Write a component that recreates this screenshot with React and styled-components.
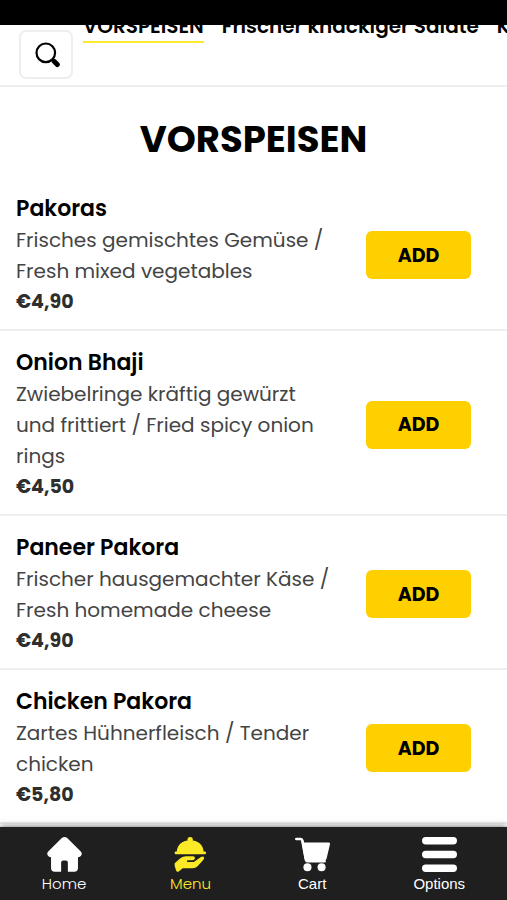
import React, { useState } from "react";
import styled, { createGlobalStyle } from "styled-components";

const GlobalStyle = createGlobalStyle`
  * {
    box-sizing: border-box;
  }
  body {
    margin: 0;
    background-color: #ffffff;
    color: #000000;
    font-family: Poppins, Inter, "Liberation Sans", sans-serif;
  }
`;

export const Page = styled.div`
  display: flex;
  flex-direction: column;
  height: 100vh;
  overflow: hidden;
`;

export const StatusBar = styled.div`
  flex: none;
  height: 25px;
  background-color: #000000;
`;

export const Header = styled.header`
  flex: none;
  display: flex;
  align-items: flex-start;
  gap: 10px;
  height: 62px;
  padding-left: 19px;
  border-bottom: 2px solid #eeeeee;
  overflow: hidden;
`;

export const SearchButton = styled.button`
  flex: none;
  display: flex;
  justify-content: center;
  align-items: center;
  width: 54px;
  height: 49px;
  margin-top: 5px;
  padding: 0;
  border: 2px solid #eeeeee;
  border-radius: 7px;
  background-color: #ffffff;
  cursor: pointer;
`;

export const Tabs = styled.nav`
  display: flex;
  gap: 18px;
  margin-top: -13px;
  overflow: hidden;
`;

export const Tab = styled.a`
  flex: none;
  border-bottom: 2px solid ${(props) => (props.$active ? "#fbe930" : "transparent")};
  color: #000000;
  font-size: 20px;
  font-weight: 600;
  line-height: 29px;
  text-decoration: none;
  white-space: nowrap;
`;

export const Main = styled.main`
  flex: 1;
  min-height: 0;
  overflow-y: auto;
  scrollbar-width: none;
`;

export const Title = styled.h1`
  margin: 0;
  padding: 24px 16px 10px;
  font-size: 37px;
  font-weight: 700;
  line-height: 56px;
  text-align: center;
`;

export const List = styled.ul`
  margin: 0;
  padding: 0;
  list-style: none;
`;

export const Item = styled.li`
  display: flex;
  align-items: center;
  gap: 36px;
  padding: 16px 36px 12px 16px;
  border-bottom: 2px solid #eeeeee;
`;

export const ItemText = styled.div`
  flex: 1;
`;

export const ItemName = styled.h2`
  margin: 0;
  font-size: 22px;
  font-weight: 600;
  line-height: 32px;
`;

export const Description = styled.p`
  margin: 0;
  color: #444444;
  font-size: 20px;
  line-height: 31px;
`;

export const Price = styled.p`
  margin: 0;
  color: #2e2e2e;
  font-size: 19px;
  font-weight: 700;
  line-height: 30px;
`;

export const AddButton = styled.button`
  flex: none;
  width: 105px;
  height: 48px;
  padding: 0;
  border: none;
  border-radius: 6px;
  background-color: #ffd000;
  color: #000000;
  font-family: inherit;
  font-size: 19px;
  font-weight: 700;
  cursor: pointer;
`;

export const BottomNav = styled.nav`
  flex: none;
  z-index: 1;
  display: flex;
  justify-content: space-around;
  height: 73px;
  padding-top: 10px;
  background-color: #1f1f1f;
  box-shadow: 0 -1px 6px rgba(0, 0, 0, 0.5);
`;

export const NavLink = styled.a`
  display: flex;
  flex-direction: column;
  align-items: center;
  color: ${(props) => (props.$active ? "#fdea27" : "#ffffff")};
  font-family: ${(props) =>
    props.$plain ? '"Liberation Sans", sans-serif' : "inherit"};
  font-size: 15px;
  font-weight: 300;
  line-height: 24px;
  text-decoration: none;

  svg {
    width: 35px;
    height: 35px;
  }
`;

const SearchIcon = () => (
  <svg width="28" height="27" viewBox="-3 -1 28 27" fill="none" stroke="#000">
    <circle cx="10.8" cy="10.8" r="9.3" strokeWidth="2.2" />
    <path d="M17.3 17.3l2 2" strokeWidth="3" />
    <path d="M19.1 19.3l3.2 3.2" strokeWidth="5" strokeLinecap="round" />
  </svg>
);

const HomeIcon = () => (
  <svg viewBox="0 0 104 104" fill="currentColor">
    <path d="M44 3Q52-3 60 3L101 44Q105 49 102 54Q99 60 92 60V92Q92 103 81 103H62V76Q62 70 56 70H48Q42 70 42 76V103H23Q12 103 12 92V60Q5 60 2 54Q-1 49 3 44Z" />
  </svg>
);

const MenuIcon = () => (
  <svg viewBox="0 0 96 104" fill="currentColor">
    <circle cx="47" cy="8" r="8" />
    <path d="M7 45C8 22 25 10 47 10S86 22 87 45Z" />
    <rect x="1" y="43" width="93" height="8" rx="3" />
    <path d="M1 78L15 65Q23 57 34 57H56Q62 58 61 64Q60 69 54 69H38V74H58L78 60Q85 56 88 60Q90 64 85 69L69 87Q63 93 54 93H25L12 103Q7 105 5 99L1 86Z" />
  </svg>
);

const CartIcon = () => (
  <svg viewBox="0 0 104 104" fill="currentColor">
    <path
      d="M4 6H17Q21 6 22 11L33 69Q34 72 39 72H88"
      fill="none"
      stroke="currentColor"
      strokeWidth="8"
      strokeLinecap="round"
    />
    <path d="M20 16H101Q105 17 104 21L94 64Q92 70 87 70H34Q29 70 28 64Z" />
    <circle cx="37" cy="90" r="12" />
    <circle cx="79" cy="90" r="12" />
  </svg>
);

const OptionsIcon = () => (
  <svg viewBox="0 0 104 104" fill="currentColor">
    <rect y="0" width="104" height="22" rx="11" />
    <rect y="41" width="104" height="22" rx="11" />
    <rect y="82" width="104" height="22" rx="11" />
  </svg>
);

const categories = ["VORSPEISEN", "Frischer knackiger Salate", "K"];

const dishes = [
  {
    name: "Pakoras",
    description: "Frisches gemischtes Gemüse / Fresh mixed vegetables",
    price: "€4,90",
  },
  {
    name: "Onion Bhaji",
    description:
      "Zwiebelringe kräftig gewürzt und frittiert / Fried spicy onion rings",
    price: "€4,50",
  },
  {
    name: "Paneer Pakora",
    description: "Frischer hausgemachter Käse / Fresh homemade cheese",
    price: "€4,90",
  },
  {
    name: "Chicken Pakora",
    description: "Zartes Hühnerfleisch / Tender chicken",
    price: "€5,80",
  },
];

export default function App() {
  const [category, setCategory] = useState(categories[0]);

  return (
    <Page>
      <GlobalStyle />
      <StatusBar />
      <Header>
        <SearchButton aria-label="Search">
          <SearchIcon />
        </SearchButton>
        <Tabs>
          {categories.map((name) => (
            <Tab
              key={name}
              href="#menu"
              $active={name === category}
              onClick={() => setCategory(name)}
            >
              {name}
            </Tab>
          ))}
        </Tabs>
      </Header>
      <Main id="menu">
        <Title>VORSPEISEN</Title>
        <List>
          {dishes.map((dish) => (
            <Item key={dish.name}>
              <ItemText>
                <ItemName>{dish.name}</ItemName>
                <Description>{dish.description}</Description>
                <Price>{dish.price}</Price>
              </ItemText>
              <AddButton>ADD</AddButton>
            </Item>
          ))}
        </List>
      </Main>
      <BottomNav>
        <NavLink href="#home">
          <HomeIcon />
          Home
        </NavLink>
        <NavLink href="#menu" $active>
          <MenuIcon />
          Menu
        </NavLink>
        <NavLink href="#cart" $plain>
          <CartIcon />
          Cart
        </NavLink>
        <NavLink href="#options" $plain>
          <OptionsIcon />
          Options
        </NavLink>
      </BottomNav>
    </Page>
  );
}
